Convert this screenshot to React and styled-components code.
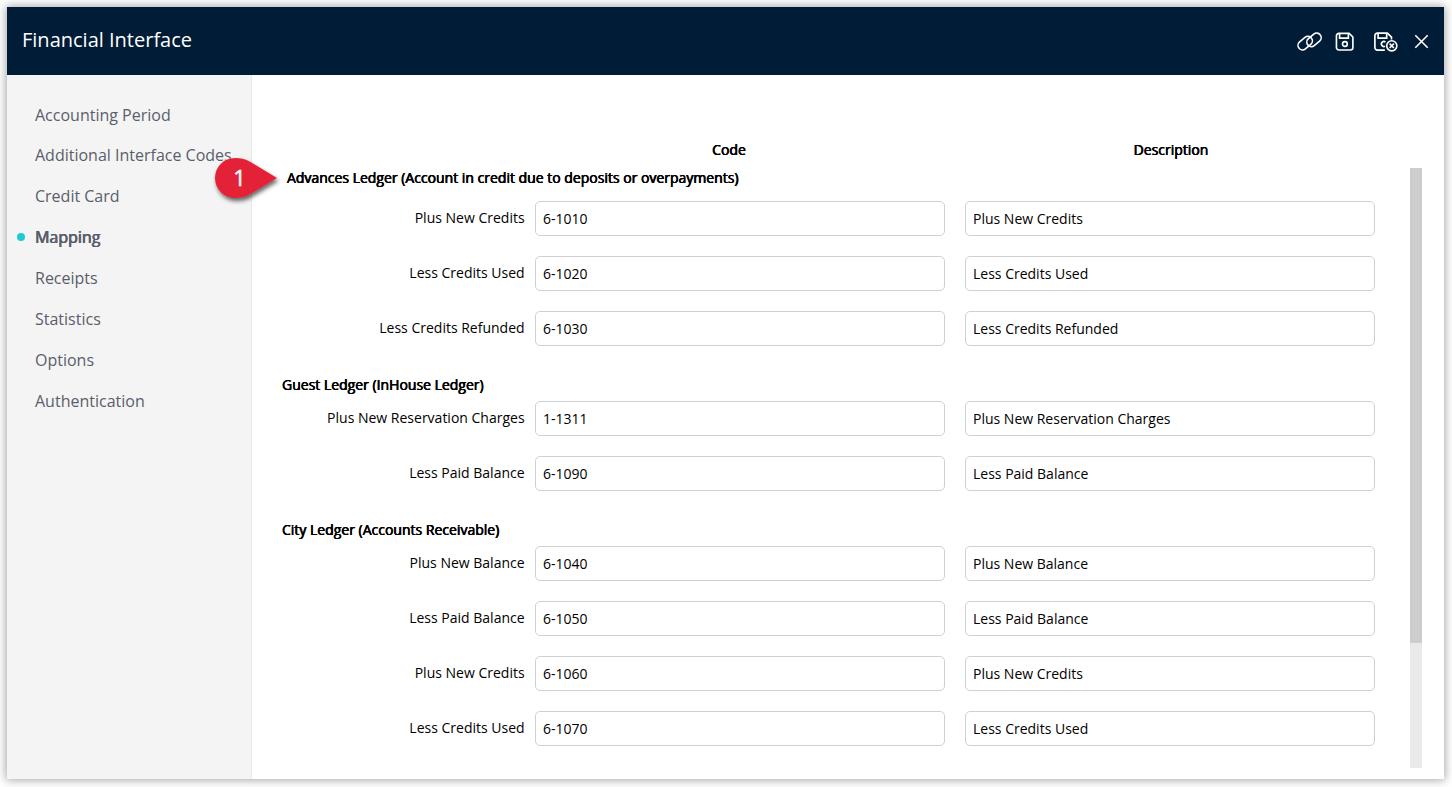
import React from 'react';
import styled, {createGlobalStyle} from 'styled-components';

const GlobalStyle = createGlobalStyle`
  * {
    box-sizing: border-box;
  }
  body {
    margin: 0;
    background: #fff;
    font-family: 'Open Sans', sans-serif;
    overflow: hidden;
  }
`;

const Page = styled.div`
  height: 787px;
  padding: 7px 8px 8px 7px;
`;

const Window = styled.div`
  display: flex;
  flex-direction: column;
  height: 772px;
  background: #fff;
  box-shadow: 0 0 9px 1px rgba(0, 0, 0, 0.36);
`;

const Header = styled.header`
  display: flex;
  justify-content: space-between;
  flex: 0 0 68px;
  padding: 0 14px 0 15px;
  background: #001c36;
  color: #fff;
`;

const Title = styled.h1`
  margin: 0;
  font-size: 20px;
  font-weight: 400;
  line-height: 66px;
`;

const Toolbar = styled.div`
  display: flex;
  align-items: center;
  padding-top: 2px;
`;

const IconButton = styled.button`
  display: flex;
  margin: 0 0 0 ${props => props.$gap || 0}px;
  padding: 0;
  border: 0;
  background: none;
  color: #fff;
`;

const Body = styled.div`
  display: flex;
  flex: 1;
  min-height: 0;
`;

const Sidebar = styled.nav`
  position: relative;
  flex: 0 0 245px;
  padding-top: 20px;
  border-right: 1px solid #e9e9e9;
  background: #f4f4f4;
`;

const NavItem = styled.div`
  display: flex;
  align-items: center;
  height: 41px;
  padding-left: 10px;
  color: #5a5e6b;
  font-size: 16px;
  white-space: nowrap;
  text-shadow: ${props => (props.$active ? '-0.3px 0 #5a5e6b, 0.4px 0 #5a5e6b' : 'none')};

  &:first-child {
    height: 39px;
    padding-top: 1px;
  }

  &::before {
    content: '';
    width: 8px;
    height: 8px;
    margin-right: 10px;
    border-radius: 50%;
    background: ${props => (props.$active ? '#1dcad3' : 'transparent')};
  }
`;

const Marker = styled.div`
  position: absolute;
  top: 77px;
  left: 202px;
  width: 76px;
  height: 56px;
`;

const Content = styled.main`
  display: flex;
  flex-direction: column;
  flex: 1;
  padding: 65px 22px 11px 30px;
  color: #000;
  font-size: 14px;
`;

const Columns = styled.div`
  display: grid;
  grid-template-columns: 253px 388px 452px;
  height: 28px;
  line-height: 20px;
`;

const ColumnTitle = styled.div`
  grid-column: ${props => props.$column};
  padding-left: ${props => props.$shift || 0}px;
  text-align: center;
  text-shadow: -0.3px 0 #000, 0.3px 0 #000;
`;

const ScrollArea = styled.div`
  display: flex;
  justify-content: space-between;
  height: 600px;
  overflow: hidden;
`;

const Ledgers = styled.div`
  width: 1093px;
`;

const LedgerTitle = styled.h2`
  height: ${props => (props.$first ? 33 : 35)}px;
  margin: 0;
  padding: ${props => (props.$first ? '0 0 0 5px' : '9px 0 0')};
  font-size: 14px;
  font-weight: 400;
  line-height: 20px;
  text-shadow: -0.3px 0 #000, 0.3px 0 #000;
`;

const Row = styled.div`
  display: grid;
  grid-template-columns: 242.6px 410px 410px;
  height: 35px;
  margin-bottom: 20px;
`;

const Label = styled.label`
  line-height: 33px;
  text-align: right;
  white-space: nowrap;
`;

const Input = styled.input`
  width: 410px;
  height: 35px;
  margin-left: ${props => props.$gap}px;
  padding: 0 7px 1px;
  border: 1px solid #d0d0d0;
  border-radius: 5px;
  background: #fff;
  color: #000;
  font: 14px 'Open Sans', sans-serif;
  outline: none;
`;

const Scrollbar = styled.div`
  width: 12px;
  height: 600px;
  background: #e9e9e9;
`;

const Thumb = styled.div`
  height: 475px;
  background: #cdcdcd;
`;

const sections = [
  'Accounting Period',
  'Additional Interface Codes',
  'Credit Card',
  'Mapping',
  'Receipts',
  'Statistics',
  'Options',
  'Authentication',
];

const ledgers = [
  {
    title: 'Advances Ledger (Account in credit due to deposits or overpayments)',
    rows: [
      ['Plus New Credits', '6-1010'],
      ['Less Credits Used', '6-1020'],
      ['Less Credits Refunded', '6-1030'],
    ],
  },
  {
    title: 'Guest Ledger (InHouse Ledger)',
    rows: [
      ['Plus New Reservation Charges', '1-1311'],
      ['Less Paid Balance', '6-1090'],
    ],
  },
  {
    title: 'City Ledger (Accounts Receivable)',
    rows: [
      ['Plus New Balance', '6-1040'],
      ['Less Paid Balance', '6-1050'],
      ['Plus New Credits', '6-1060'],
      ['Less Credits Used', '6-1070'],
    ],
  },
];

const LinkIcon = () => (
  <svg width="26" height="20" viewBox="0 0 26 20" fill="none" stroke="currentColor" strokeWidth="1.6">
    <rect x="0.2" y="6.6" width="16" height="9" rx="4.5" transform="rotate(-40 8.2 11.1)"/>
    <rect x="9" y="3.4" width="16" height="9" rx="4.5" transform="rotate(-40 17 7.9)"/>
  </svg>
);

const SaveIcon = () => (
  <svg width="20" height="20" viewBox="-0.3 -0.2 20.8 20.8" fill="none" stroke="currentColor" strokeWidth="1.7">
    <path d="M3.8 1.2 H14.4 L18.3 5 V15.9 A2.6 2.6 0 0 1 15.7 18.5 H3.8 A2.6 2.6 0 0 1 1.2 15.9 V3.8 A2.6 2.6 0 0 1 3.8 1.2 Z"/>
    <path d="M4.5 1.5 V6.2 H13.6 V1.5"/>
    <circle cx="10" cy="12.3" r="2.5"/>
  </svg>
);

const SaveCloseIcon = () => (
  <svg width="25" height="20" viewBox="0.3 0 25.6 20.5" fill="none" stroke="currentColor" strokeWidth="1.7">
    <path d="M11.4 18.5 H3.8 A2.6 2.6 0 0 1 1.2 15.9 V3.8 A2.6 2.6 0 0 1 3.8 1.2 H14 L18.2 5.2 V7.6"/>
    <path d="M4.5 1.5 V6.2 H13.3 V1.5"/>
    <path d="M12 10.4 A2.5 2.5 0 1 0 11.6 14.5"/>
    <circle cx="18.5" cy="14.2" r="5.2"/>
    <path d="M16.3 12 L20.7 16.4 M20.7 12 L16.3 16.4"/>
  </svg>
);

const CloseIcon = () => (
  <svg width="16" height="16" viewBox="0.5 0.5 16 16" fill="none" stroke="currentColor" strokeWidth="1.6">
    <path d="M1.8 1.8 L14.2 14.2 M14.2 1.8 L1.8 14.2"/>
  </svg>
);

const StepMarker = () => (
  <Marker>
    <svg width="76" height="56" viewBox="0 0 76 56">
      <defs>
        <filter id="marker-shadow" x="-20%" y="-20%" width="150%" height="160%">
          <feDropShadow dx="1.5" dy="3" stdDeviation="2" floodColor="#000" floodOpacity="0.6"/>
        </filter>
      </defs>
      <path
        d="M68 26 L41.5 42 C36 45.3 31.5 46 26 46 A20 20 0 1 1 26 6 C31.5 6 36 6.7 41.5 10 Z"
        fill="#e32237"
        filter="url(#marker-shadow)"
      />
      <text x="30.5" y="33.7" fill="#fff" fontFamily="Open Sans, sans-serif" fontSize="22" textAnchor="middle" stroke="#fff" strokeWidth="0.5">1</text>
    </svg>
  </Marker>
);

export default function App() {
  return (
    <Page>
      <GlobalStyle/>
      <Window>
        <Header>
          <Title>Financial Interface</Title>
          <Toolbar>
            <IconButton aria-label="Link"><LinkIcon/></IconButton>
            <IconButton $gap={12} aria-label="Save"><SaveIcon/></IconButton>
            <IconButton $gap={19} aria-label="Save and close"><SaveCloseIcon/></IconButton>
            <IconButton $gap={15} aria-label="Close"><CloseIcon/></IconButton>
          </Toolbar>
        </Header>

        <Body>
          <Sidebar>
            {sections.map(name => (
              <NavItem key={name} $active={name === 'Mapping'}>{name}</NavItem>
            ))}
            <StepMarker/>
          </Sidebar>

          <Content>
            <Columns>
              <ColumnTitle $column={2}>Code</ColumnTitle>
              <ColumnTitle $column={3} $shift={44}>Description</ColumnTitle>
            </Columns>
            <ScrollArea>
              <Ledgers>
                {ledgers.map((ledger, index) => (
                  <section key={ledger.title}>
                    <LedgerTitle $first={index === 0}>{ledger.title}</LedgerTitle>
                    {ledger.rows.map(([label, code]) => (
                      <Row key={code}>
                        <Label>{label}</Label>
                        <Input $gap={10.4} defaultValue={code}/>
                        <Input $gap={30.4} defaultValue={label}/>
                      </Row>
                    ))}
                  </section>
                ))}
              </Ledgers>
              <Scrollbar>
                <Thumb/>
              </Scrollbar>
            </ScrollArea>
          </Content>
        </Body>
      </Window>
    </Page>
  );
}
